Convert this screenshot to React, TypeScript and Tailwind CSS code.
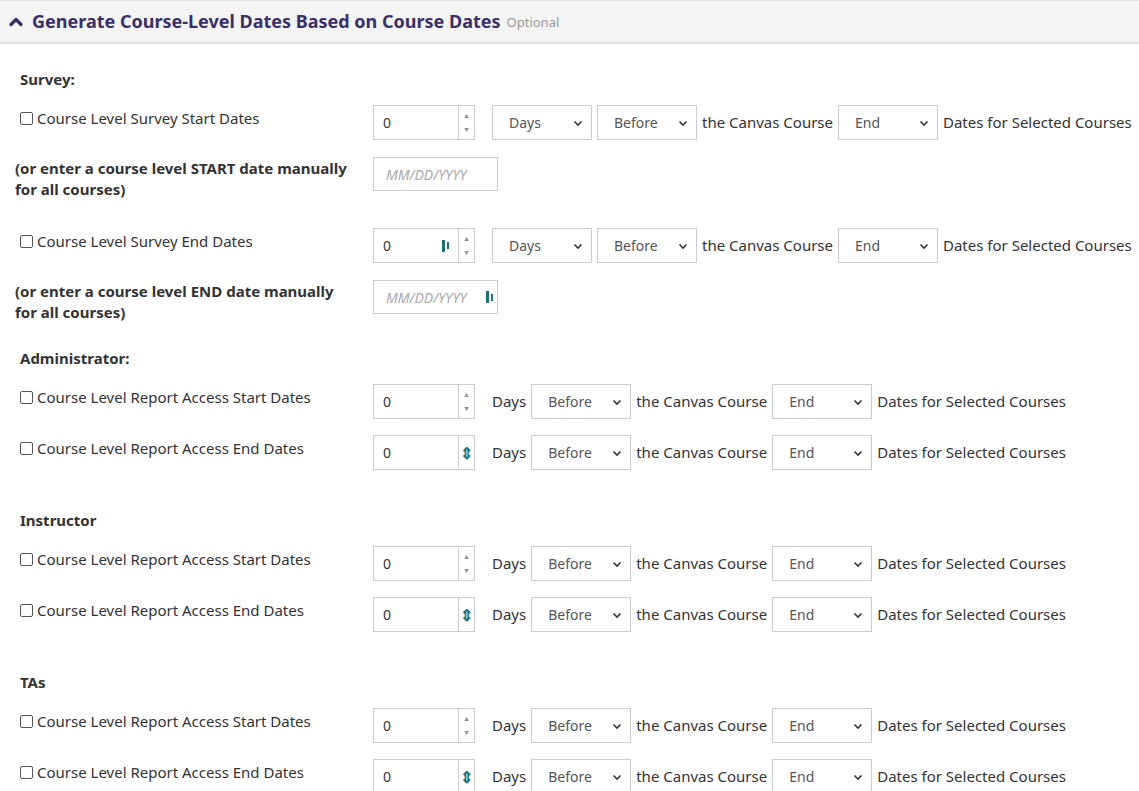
import { ChevronUp } from "lucide-react";

const Mark = () => (
  <span className="inline-flex items-center gap-[2px]">
    <span className="w-[3px] h-[12px] bg-[#1f6f78]" />
    <span className="w-[2px] h-[7px] bg-[#1f6f78]" />
  </span>
);

const NumberBox = ({ mark }: { mark?: "pw" | "spin" }) => (
  <div className="flex w-[102px] h-[35px] border border-[#ccc] bg-white">
    <div className="flex-1 flex items-center justify-between px-[9px] text-[14px] text-[#333]">
      <span>0</span>
      {mark === "pw" && <Mark />}
    </div>
    <div className="w-[16px] border-l border-[#ccc] flex flex-col items-center justify-center text-[#888] text-[7px] leading-[12px] gap-[2px]">
      {mark === "spin" ? (
        <span className="text-[#1f6f78] text-[16px] font-bold">⇕</span>
      ) : (
        <>
          <span>▲</span>
          <span>▼</span>
        </>
      )}
    </div>
  </div>
);

const Sel = ({ value }: { value: string }) => (
  <div className="w-[100px] h-[35px] border border-[#ccc] bg-white flex items-center justify-between pl-[16px] pr-[8px] text-[14px] text-[#555]">
    <span>{value}</span>
    <svg width="10" height="10" viewBox="0 0 10 10"><path d="M1.5 3.5 L5 7 L8.5 3.5" stroke="#333" strokeWidth="1.6" fill="none" /></svg>
  </div>
);

const Check = ({ label }: { label: string }) => (
  <div className="flex items-center gap-[4px] text-[15px] text-[#333]">
    <span className="w-[13px] h-[13px] border border-[#555] rounded-[2px] bg-white" />
    <span>{label}</span>
  </div>
);

const Row = ({ label, mark, days }: { label: string; mark?: "pw" | "spin"; days?: boolean }) => (
  <div className="flex items-start">
    <div className="w-[353px] pt-[2px]"><Check label={label} /></div>
    <div className="flex items-center gap-[5px] text-[15px] text-[#333]">
      <NumberBox mark={mark} />
      {days ? <div className="ml-[12px]"><Sel value="Days" /></div> : <span className="ml-[12px]">Days</span>}
      <Sel value="Before" />
      <span>the Canvas Course</span>
      <Sel value="End" />
      <span>Dates for Selected Courses</span>
    </div>
  </div>
);

const Manual = ({ text, mark }: { text: string; mark?: boolean }) => (
  <div className="flex items-start h-[34px]">
    <div className="w-[353px] -ml-[5px] pr-[10px] text-[15px] font-bold text-[#333] leading-[21px] pt-[1px]">{text}</div>
    <div className="ml-[5px] w-[125px] h-[34px] border border-[#ccc] flex items-center justify-between pl-[12px] pr-[4px] text-[14px] italic text-[#aaa]">
      <span>MM/DD/YYYY</span>
      {mark && <Mark />}
    </div>
  </div>
);

const Heading = ({ t }: { t: string }) => (
  <div className="text-[15px] font-bold text-[#333] leading-[18px]">{t}</div>
);

export default function App() {
  return (
    <div className="w-[1139px] min-h-[791px] bg-white font-['Liberation_Sans'] overflow-hidden">
      <div className="h-[44px] bg-[#f4f4f4] border-t border-[#e2e2e2] border-b-2 border-b-[#e0e0e0] flex items-center pl-[6px] gap-[6px]">
        <ChevronUp size={20} strokeWidth={4} className="text-[#3b2f6b]" />
        <span className="text-[18px] font-bold text-[#3b2f6b]">Generate Course-Level Dates Based on Course Dates</span>
        <span className="text-[13px] text-[#999] mt-[2px]">Optional</span>
      </div>
      <div className="pl-[20px] pt-[26px]">
        <Heading t="Survey:" />
        <div className="mt-[17px]"><Row label="Course Level Survey Start Dates" days /></div>
        <div className="mt-[17px]"><Manual text="(or enter a course level START date manually for all courses)" /></div>
        <div className="mt-[37px]"><Row label="Course Level Survey End Dates" mark="pw" days /></div>
        <div className="mt-[17px]"><Manual text="(or enter a course level END date manually for all courses)" mark /></div>
        <div className="mt-[35px]"><Heading t="Administrator:" /></div>
        <div className="mt-[17px]"><Row label="Course Level Report Access Start Dates" /></div>
        <div className="mt-[16px]"><Row label="Course Level Report Access End Dates" mark="spin" /></div>
        <div className="mt-[41px]"><Heading t="Instructor" /></div>
        <div className="mt-[17px]"><Row label="Course Level Report Access Start Dates" /></div>
        <div className="mt-[16px]"><Row label="Course Level Report Access End Dates" mark="spin" /></div>
        <div className="mt-[41px]"><Heading t="TAs" /></div>
        <div className="mt-[17px]"><Row label="Course Level Report Access Start Dates" /></div>
        <div className="mt-[16px]"><Row label="Course Level Report Access End Dates" mark="spin" /></div>
      </div>
    </div>
  );
}
